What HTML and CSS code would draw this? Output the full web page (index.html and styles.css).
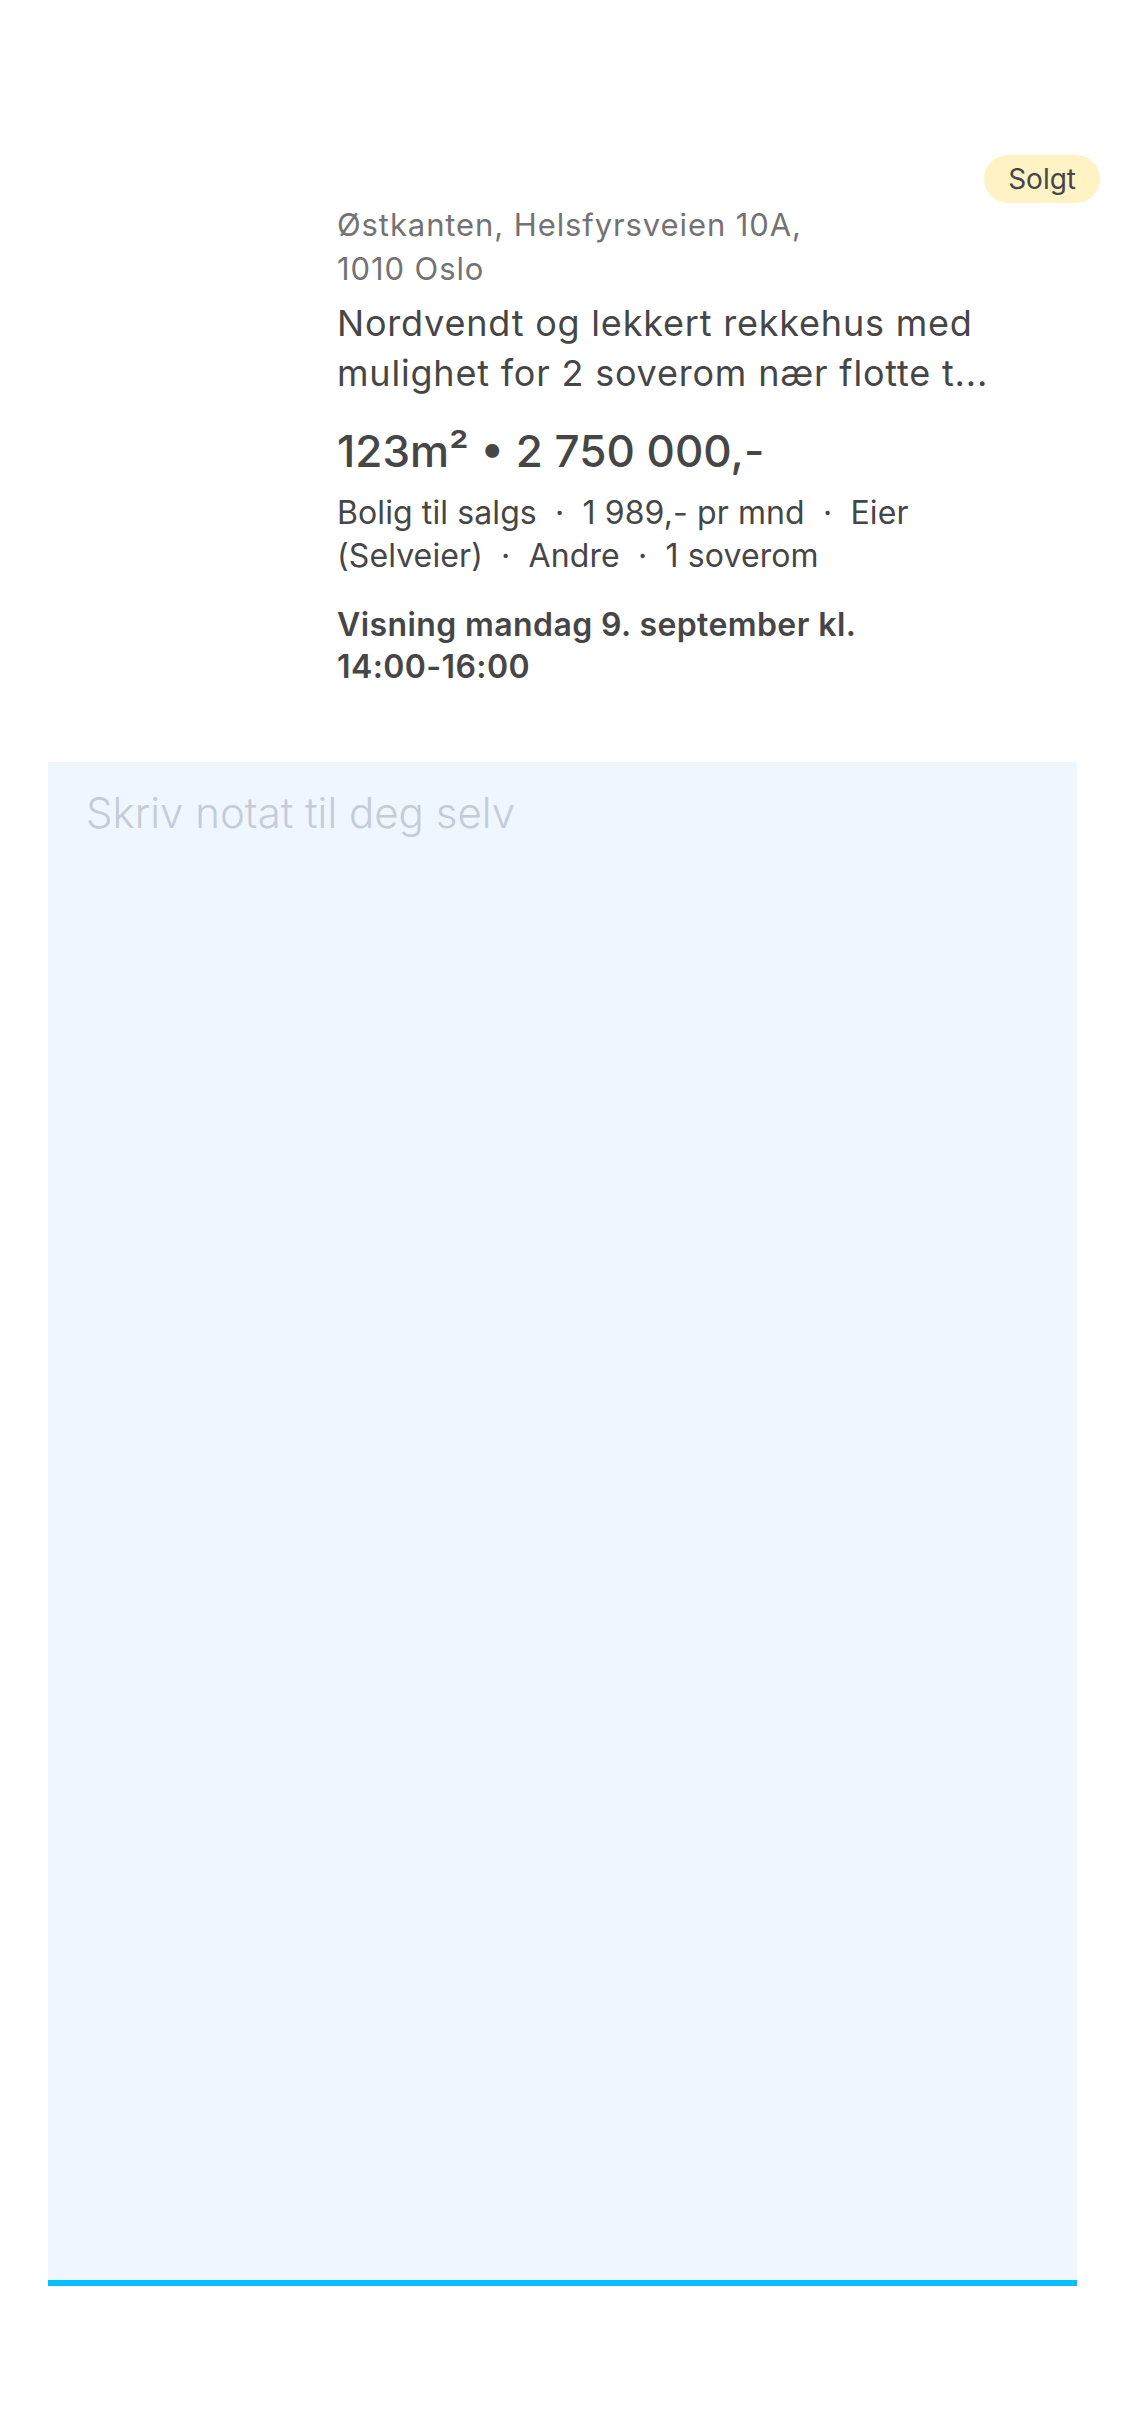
FILE: index.html
```html
<!DOCTYPE html>
<html lang="no">
<head>
<meta charset="utf-8">
<title>Notat</title>
<link rel="stylesheet" href="styles.css">
</head>
<body>
<main class="page">
  <section class="listing">
    <div class="thumb"></div>
    <div class="info">
      <p class="address">Østkanten, Helsfyrsveien 10A,<br>1010 Oslo</p>
      <h1 class="title">Nordvendt og lekkert rekkehus med mulighet for 2 soverom nær flotte t...</h1>
      <p class="price">123m² • 2 750 000,-</p>
      <p class="meta">Bolig til salgs  ·  1 989,- pr mnd  ·  Eier (Selveier)  ·  Andre  ·  1 soverom</p>
      <p class="viewing">Visning mandag 9. september kl. <span class="nowrap">14:00-16:00</span></p>
    </div>
    <span class="badge">Solgt</span>
  </section>
  <section class="note">
    <div class="note-placeholder">Skriv notat til deg selv</div>
  </section>
</main>
</body>
</html>
```
FILE: styles.css
```css
html, body {
  margin: 0;
  padding: 0;
  background: #ffffff;
}

body {
  font-family: "Inter", "Lato", sans-serif;
  color: #464646;
}

.page {
  padding: 0 48px;
}

.listing {
  position: relative;
  display: flex;
  gap: 32px;
  padding-top: 203px;
}

.thumb {
  width: 257px;
  flex: none;
}

.info {
  width: 668px;
  display: flex;
  flex-direction: column;
}

.info p, .info h1 {
  margin: 0;
}

.address {
  font-size: 31px;
  line-height: 44px;
  color: #737373;
  letter-spacing: 0.9px;
}

.title {
  margin-top: 7px !important;
  font-size: 36px;
  line-height: 50px;
  font-weight: 400;
  color: #464646;
  letter-spacing: 0.8px;
}

.price {
  margin-top: 25px !important;
  font-size: 44px;
  line-height: 56px;
  font-weight: 500;
  letter-spacing: 0;
}

.meta {
  margin-top: 12px !important;
  font-size: 32px;
  line-height: 43px;
  letter-spacing: 0.1px;
  white-space: pre-wrap;
}

.viewing {
  margin-top: 27px !important;
  font-size: 32px;
  line-height: 42px;
  font-weight: 600;
  letter-spacing: 0.4px;
}

.nowrap {
  white-space: nowrap;
}

.badge {
  position: absolute;
  top: 155px;
  right: -23px;
  height: 48px;
  padding: 0 24px;
  border-radius: 24px;
  background: #fff2c4;
  color: #464646;
  font-size: 28px;
  line-height: 48px;
}

.note {
  margin-top: 74px;
  height: 1524px;
  box-sizing: border-box;
  background: #eff6fe;
  border-bottom: 6px solid #06bffc;
  padding: 26px 38px 0;
}

.note-placeholder {
  font-size: 42px;
  line-height: 50px;
  font-weight: 300;
  color: #c4ccd8;
  letter-spacing: 0;
}
```
